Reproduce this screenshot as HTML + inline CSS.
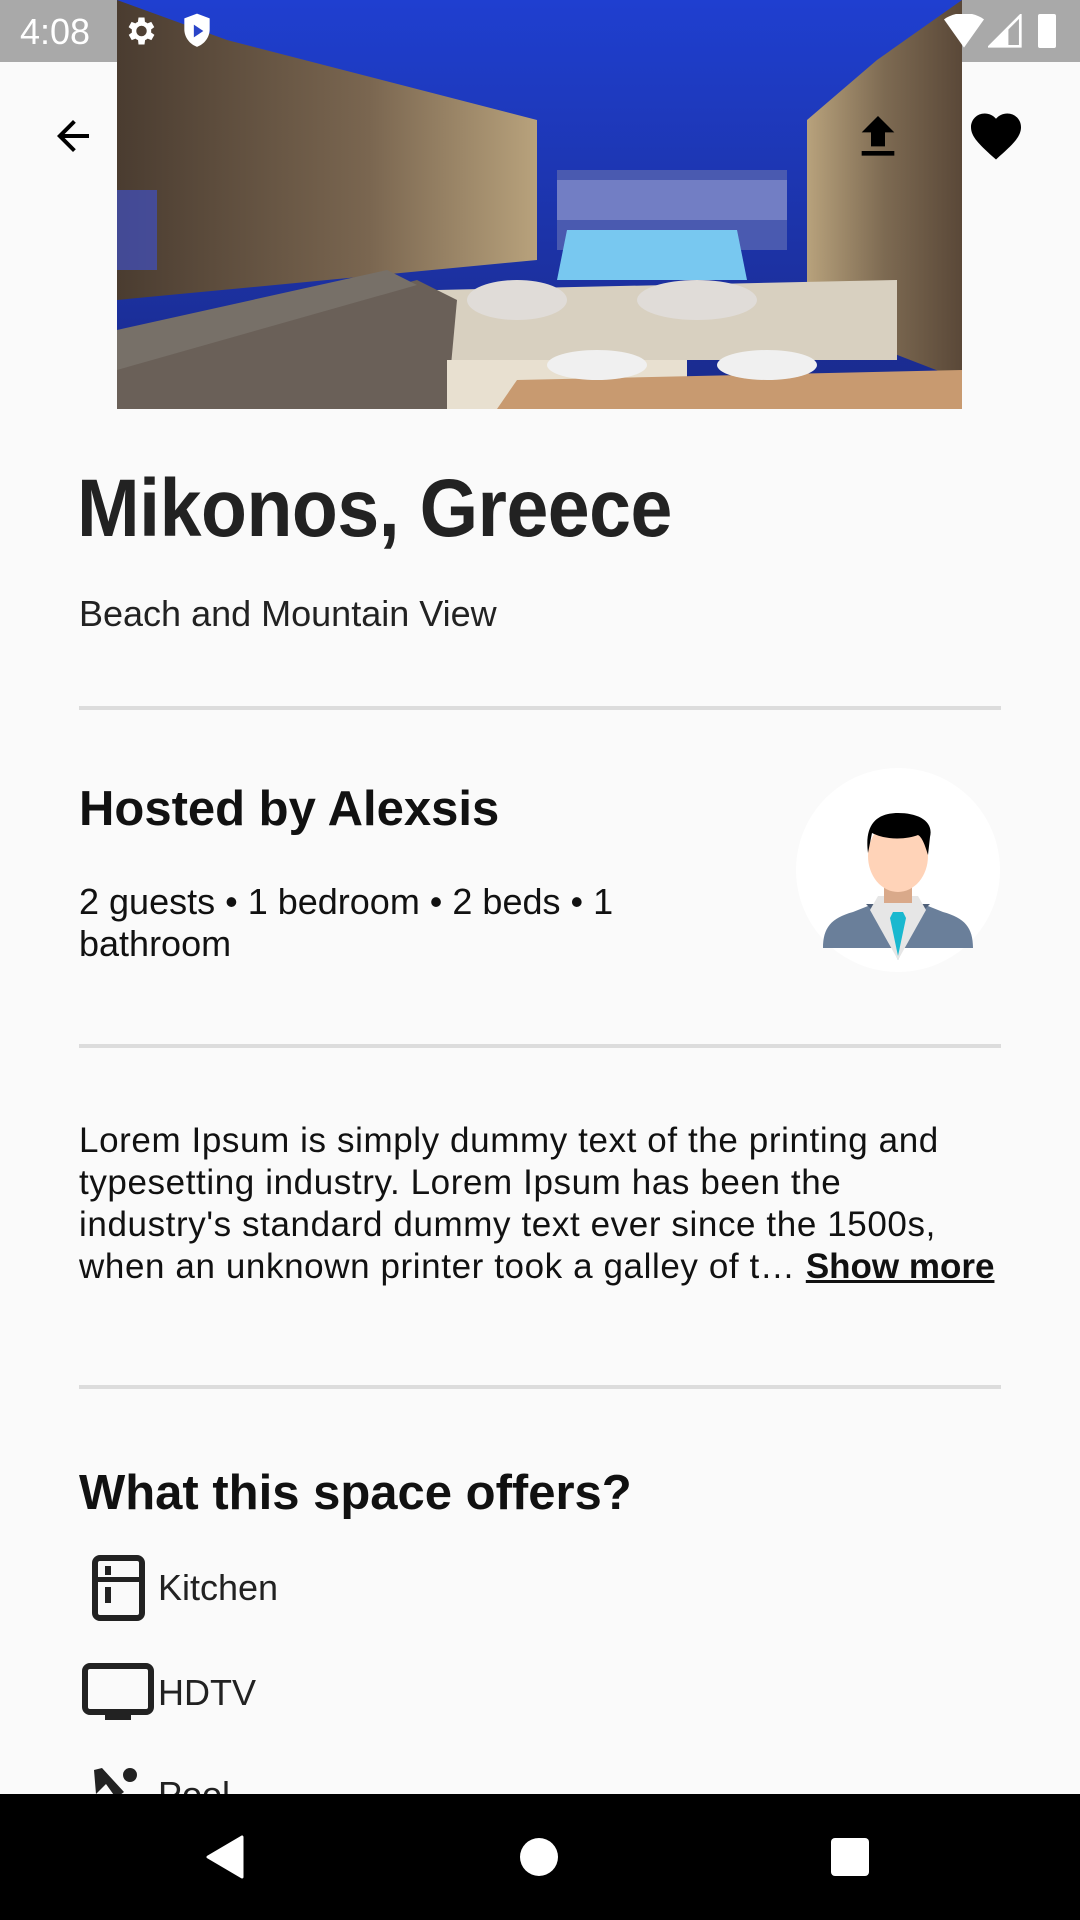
<!DOCTYPE html>
<html><head><meta charset="utf-8"><style>
*{margin:0;padding:0;box-sizing:border-box}
body{width:1080px;height:1920px;background:#fafafa;font-family:"Liberation Sans",sans-serif;color:#000;position:relative;overflow:hidden}
.abs{position:absolute}
.hr{position:absolute;left:79px;width:922px;height:4px;background:#dcdcdc}
.t{position:absolute;white-space:nowrap}
</style></head><body>
<div class="abs" style="left:0;top:0;width:1080px;height:62px;background:#a9a9a9"></div>
<div class="abs" style="left:117px;top:0;width:845px;height:409px;overflow:hidden;background:#2a44c8">
<svg width="845" height="409" viewBox="0 0 845 409">
<defs>
<linearGradient id="sky" x1="0" y1="0" x2="0" y2="1"><stop offset="0" stop-color="#1f3fd0"/><stop offset="1" stop-color="#1a2a8a"/></linearGradient>
<linearGradient id="wl" x1="0" y1="0" x2="1" y2="0"><stop offset="0" stop-color="#4a3c30"/><stop offset="0.6" stop-color="#7a6650"/><stop offset="1" stop-color="#b8a27c"/></linearGradient>
<linearGradient id="wr" x1="0" y1="0" x2="1" y2="0"><stop offset="0" stop-color="#b8a27c"/><stop offset="0.5" stop-color="#7d6a52"/><stop offset="1" stop-color="#5a4838"/></linearGradient>
</defs>
<rect width="845" height="409" fill="url(#sky)"/>
<rect x="440" y="170" width="230" height="80" fill="#4a5ab0"/>
<rect x="440" y="180" width="230" height="40" fill="#9aa2d8" opacity="0.5"/>
<polygon points="0,0 110,40 420,120 420,260 0,300" fill="url(#wl)"/>
<polygon points="690,120 760,60 845,0 845,380 690,320" fill="url(#wr)"/>
<rect x="0" y="190" width="40" height="80" fill="#4050c0" opacity="0.7"/>
<polygon points="450,230 620,230 630,280 440,280" fill="#78c8f0"/>
<polygon points="320,290 780,280 780,360 320,360" fill="#d8d0c0"/>
<polygon points="0,360 300,280 340,300 330,409 0,409" fill="#6a6058"/>
<polygon points="0,330 270,270 300,285 0,370" fill="#777068"/>
<polygon points="330,360 570,360 570,409 330,409" fill="#e8e0d0"/>
<ellipse cx="400" cy="300" rx="50" ry="20" fill="#e0dcd8"/>
<ellipse cx="580" cy="300" rx="60" ry="20" fill="#e0dcd8"/>
<polygon points="400,380 845,370 845,409 380,409" fill="#c89a70"/>
<ellipse cx="480" cy="365" rx="50" ry="15" fill="#f0f0f0"/>
<ellipse cx="650" cy="365" rx="50" ry="15" fill="#f0f0f0"/>
</svg>
</div>
<div class="t" style="left:20px;top:11px;font-size:36px;color:#fff">4:08</div>
<svg class="abs" style="left:120px;top:13px" width="40" height="36" viewBox="0 0 24 24"><path fill="#fff" d="M19.4 13a7.5 7.5 0 000-2l2.1-1.6-2-3.5-2.5 1a7 7 0 00-1.7-1L15 3h-4l-.4 2.9a7 7 0 00-1.7 1l-2.5-1-2 3.5L6.6 11a7.5 7.5 0 000 2l-2.1 1.6 2 3.5 2.5-1a7 7 0 001.7 1L11 21h4l.4-2.9a7 7 0 001.7-1l2.5 1 2-3.5zM13 15.5a3.5 3.5 0 110-7 3.5 3.5 0 010 7z"/></svg>
<svg class="abs" style="left:180px;top:12px" width="34" height="38" viewBox="0 0 20 24"><path fill="#fff" d="M10 1L2 4v7c0 5 3.5 9.5 8 11 4.5-1.5 8-6 8-11V4z"/><path fill="#2a44c8" d="M8 8l6 4-6 4z"/></svg>
<svg class="abs" style="left:944px;top:14px" width="40" height="34" viewBox="0 0 24 20"><path fill="#fff" d="M0 3C7-2 17-2 24 3L12 20z"/></svg>
<svg class="abs" style="left:988px;top:14px" width="34" height="34" viewBox="0 0 20 20"><path fill="none" stroke="#fff" stroke-width="1.6" d="M19 1V19H1z"/><path fill="#fff" d="M12 8V19H1z"/></svg>
<div class="abs" style="left:1038px;top:14px;width:18px;height:34px;background:#fff;border-radius:2px"></div>
<svg class="abs" style="left:49px;top:112px" width="48" height="48" viewBox="0 0 24 24"><path fill="#000" d="M20 11H7.8l5.6-5.6L12 4l-8 8 8 8 1.4-1.4L7.8 13H20z"/></svg>
<svg class="abs" style="left:850px;top:109px" width="56" height="56" viewBox="0 0 24 24"><path fill="#000" d="M9 16h6v-6h4l-7-7-7 7h4zm-4 2h14v2H5z"/></svg>
<svg class="abs" style="left:966px;top:106px" width="60" height="60" viewBox="0 0 24 24"><path fill="#000" d="M12 21.4l-1.5-1.3C5.4 15.4 2 12.3 2 8.5 2 5.4 4.4 3 7.5 3c1.7 0 3.4.8 4.5 2.1C13.1 3.8 14.8 3 16.5 3 19.6 3 22 5.4 22 8.5c0 3.8-3.4 6.9-8.5 11.5z"/></svg>
<div class="t" style="left:77px;top:462px;font-size:82px;font-weight:bold;color:#222;letter-spacing:-0.5px;transform:scaleX(0.917);transform-origin:0 0">Mikonos, Greece</div>
<div class="t" style="left:79px;top:593px;font-size:36px;color:#222">Beach and Mountain View</div>
<div class="hr" style="top:706px"></div>
<div class="t" style="left:79px;top:781px;font-size:49px;font-weight:bold;color:#111">Hosted by Alexsis</div>
<div class="t" style="left:79px;top:881px;font-size:36px;line-height:42px;color:#111">2 guests • 1 bedroom • 2 beds • 1<br>bathroom</div>
<svg class="abs" style="left:796px;top:768px" width="204" height="204" viewBox="0 0 204 204">
<circle cx="102" cy="102" r="102" fill="#fff"/>
<path d="M27 180c0-20 8-30 30-36l20-8h50l20 8c22 6 30 16 30 36z" fill="#6a7f9a"/>
<path d="M70 136l10 10 22 46 22-46 10-10" fill="#4f6079"/>
<path d="M82 128h40l8 14-28 50-28-50z" fill="#e6e6e6"/>
<path d="M97 144h10l3 6-8 38-8-38z" fill="#1ab8cf"/>
<rect x="88" y="105" width="28" height="30" fill="#d9a98a"/>
<ellipse cx="102" cy="88" rx="30" ry="36" fill="#ffd3b8"/>
<path d="M72 85c-4-30 10-40 30-40s36 8 32 24l-2 18c-3-10-6-18-10-20-10 4-30 6-46-2z" fill="#000"/>
</svg>
<div class="hr" style="top:1044px"></div>
<div class="t" style="left:79px;top:1120px;font-size:35px;line-height:42px;color:#111;letter-spacing:0.6px">Lorem Ipsum is simply dummy text of the printing and<br>typesetting industry. Lorem Ipsum has been the<br>industry's standard dummy text ever since the 1500s,<br>when an unknown printer took a galley of t… <b style="text-decoration:underline;letter-spacing:0">Show more</b></div>
<div class="hr" style="top:1385px"></div>
<div class="t" style="left:79px;top:1465px;font-size:49px;font-weight:bold;color:#111">What this space offers?</div>
<svg class="abs" style="left:92px;top:1555px" width="53" height="66" viewBox="0 0 53 66"><rect x="3" y="3" width="47" height="60" rx="5" fill="none" stroke="#222" stroke-width="6"/><rect x="3" y="22" width="47" height="5" fill="#222"/><rect x="13" y="11" width="6" height="9" fill="#222"/><rect x="13" y="32" width="6" height="16" fill="#222"/></svg>
<div class="t" style="left:158px;top:1567px;font-size:36px;color:#222">Kitchen</div>
<svg class="abs" style="left:82px;top:1663px" width="72" height="60" viewBox="0 0 72 60"><rect x="3" y="3" width="66" height="46" rx="5" fill="none" stroke="#222" stroke-width="6"/><rect x="23" y="49" width="26" height="8" fill="#222"/></svg>
<div class="t" style="left:158px;top:1672px;font-size:36px;color:#222">HDTV</div>
<svg class="abs" style="left:92px;top:1766px" width="50" height="30" viewBox="0 0 50 30"><circle cx="38" cy="9" r="7" fill="#222"/><path d="M2 4l8-2 22 24-8 6-10-14-10 10z" fill="#222"/></svg>
<div class="t" style="left:158px;top:1774px;font-size:36px;color:#222">Pool</div>
<div class="abs" style="left:0;top:1794px;width:1080px;height:126px;background:#000"></div>
<svg class="abs" style="left:205px;top:1835px" width="40" height="44" viewBox="0 0 40 44"><path d="M37 2V42L3 22z" fill="#fff" stroke="#fff" stroke-width="3" stroke-linejoin="round"/></svg>
<div class="abs" style="left:520px;top:1838px;width:38px;height:38px;border-radius:50%;background:#fff"></div>
<div class="abs" style="left:831px;top:1838px;width:38px;height:38px;border-radius:4px;background:#fff"></div>
</body></html>
